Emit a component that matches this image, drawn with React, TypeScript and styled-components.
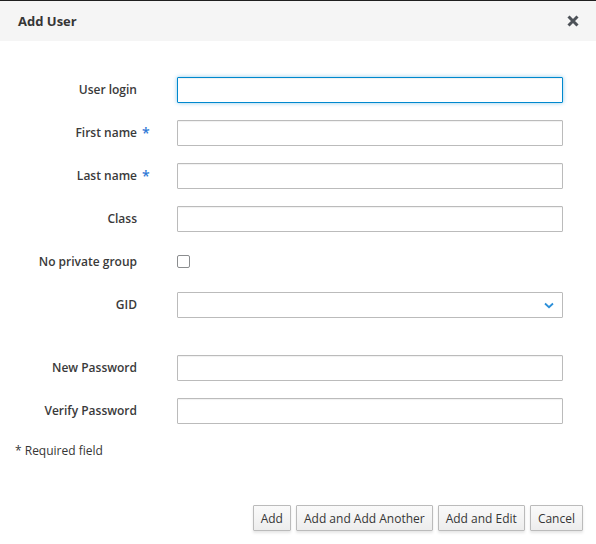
import React from 'react'
import styled, { createGlobalStyle } from 'styled-components'

const GlobalStyle = createGlobalStyle`
  html, body {
    margin: 0;
    padding: 0;
    background: #fff;
  }
  body {
    font-family: "Open Sans", "Liberation Sans", sans-serif;
    font-size: 12px;
    color: #363636;
  }
`

const Modal = styled.div`
  width: 596px;
  height: 544px;
  display: flex;
  flex-direction: column;
  border-top: 1px solid #1f1f1f;
  box-sizing: border-box;
`

const Header = styled.div`
  height: 40px;
  background: #f5f5f5;
  display: flex;
  align-items: center;
  justify-content: space-between;
  padding: 0 16px 0 18px;
`

const Title = styled.h4`
  margin: 0;
  font-size: 13px;
  font-weight: 700;
  color: #363636;
`

const CloseButton = styled.button`
  border: 0;
  background: none;
  padding: 0;
  width: 14px;
  height: 14px;
  display: flex;
  align-items: center;
  justify-content: center;
  cursor: pointer;
`

const Body = styled.div`
  flex: 1;
  padding: 36px 0 0 15px;
  display: flex;
  flex-direction: column;
`

const Form = styled.div`
  display: grid;
  grid-template-columns: 122px 40px 386px;
  row-gap: 17px;
  align-items: center;
`

const Label = styled.label`
  text-align: right;
  font-weight: 600;
  line-height: 26px;
  white-space: nowrap;
  color: #3a3a3a;
`

const Marker = styled.span`
  color: #2f78d6;
  font-weight: 600;
  font-size: 14px;
  padding-left: 5px;
  line-height: 26px;
`

const Spacer = styled.div`
  grid-column: 1 / -1;
  height: 3px;
`

const Input = styled.input`
  box-sizing: border-box;
  height: 26px;
  width: 100%;
  margin: 0;
  border: 1px solid #bbb;
  border-radius: 1px;
  padding: 2px 6px;
  font: inherit;
  color: #363636;
  outline: none;
  box-shadow: inset 0 1px 1px rgba(3, 3, 3, 0.06);

  &:focus {
    border-color: #0088ce;
    box-shadow: inset 0 1px 1px rgba(3, 3, 3, 0.06), 0 0 4px rgba(0, 136, 206, 0.45);
  }
`

const Check = styled.span`
  display: block;
  width: 11px;
  height: 11px;
  margin: -2px 0 0 0;
  border: 1px solid #8b8d8f;
  border-radius: 2px;
  background: #fff;
`

const Select = styled.div`
  box-sizing: border-box;
  height: 26px;
  border: 1px solid #bbb;
  border-radius: 1px;
  display: flex;
  align-items: center;
  justify-content: flex-end;
  padding-right: 8px;
  background: #fff;
`

const Required = styled.div`
  margin-top: 18px;
  color: #363636;
`

const Footer = styled.div`
  display: flex;
  justify-content: flex-end;
  gap: 5px;
  padding: 0 13px 13px 0;
`

const Button = styled.button`
  height: 26px;
  padding: 0 7px;
  font-family: inherit;
  font-size: 12px;
  color: #363636;
  border: 1px solid #bbb;
  border-radius: 1px;
  background: linear-gradient(#fafafa, #ededed);
  box-shadow: 0 2px 3px rgba(3, 3, 3, 0.1);
  cursor: pointer;
`

const Chevron = () => (
  <svg width="10" height="7" viewBox="0 0 10 7">
    <path d="M1 1.5 L5 5.2 L9 1.5" fill="none" stroke="#2b8fd9" strokeWidth="1.8" />
  </svg>
)

const CloseIcon = () => (
  <svg width="12" height="12" viewBox="0 0 12 12">
    <path d="M1.5 1.5 L10.5 10.5 M10.5 1.5 L1.5 10.5" stroke="#4d5258" strokeWidth="3" />
  </svg>
)

const App: React.FC = () => {
  return (
    <Modal>
      <GlobalStyle />
      <Header>
        <Title>Add User</Title>
        <CloseButton aria-label="Close">
          <CloseIcon />
        </CloseButton>
      </Header>
      <Body>
        <Form>
          <Label>User login</Label>
          <span />
          <Input autoFocus />

          <Label>First name</Label>
          <Marker>*</Marker>
          <Input />

          <Label>Last name</Label>
          <Marker>*</Marker>
          <Input />

          <Label>Class</Label>
          <span />
          <Input />

          <Label>No private group</Label>
          <span />
          <div>
            <Check />
          </div>

          <Label>GID</Label>
          <span />
          <Select>
            <Chevron />
          </Select>

          <Spacer />

          <Label>New Password</Label>
          <span />
          <Input type="password" />

          <Label>Verify Password</Label>
          <span />
          <Input type="password" />
        </Form>
        <Required>* Required field</Required>
      </Body>
      <Footer>
        <Button>Add</Button>
        <Button>Add and Add Another</Button>
        <Button>Add and Edit</Button>
        <Button>Cancel</Button>
      </Footer>
    </Modal>
  )
}

export default App
